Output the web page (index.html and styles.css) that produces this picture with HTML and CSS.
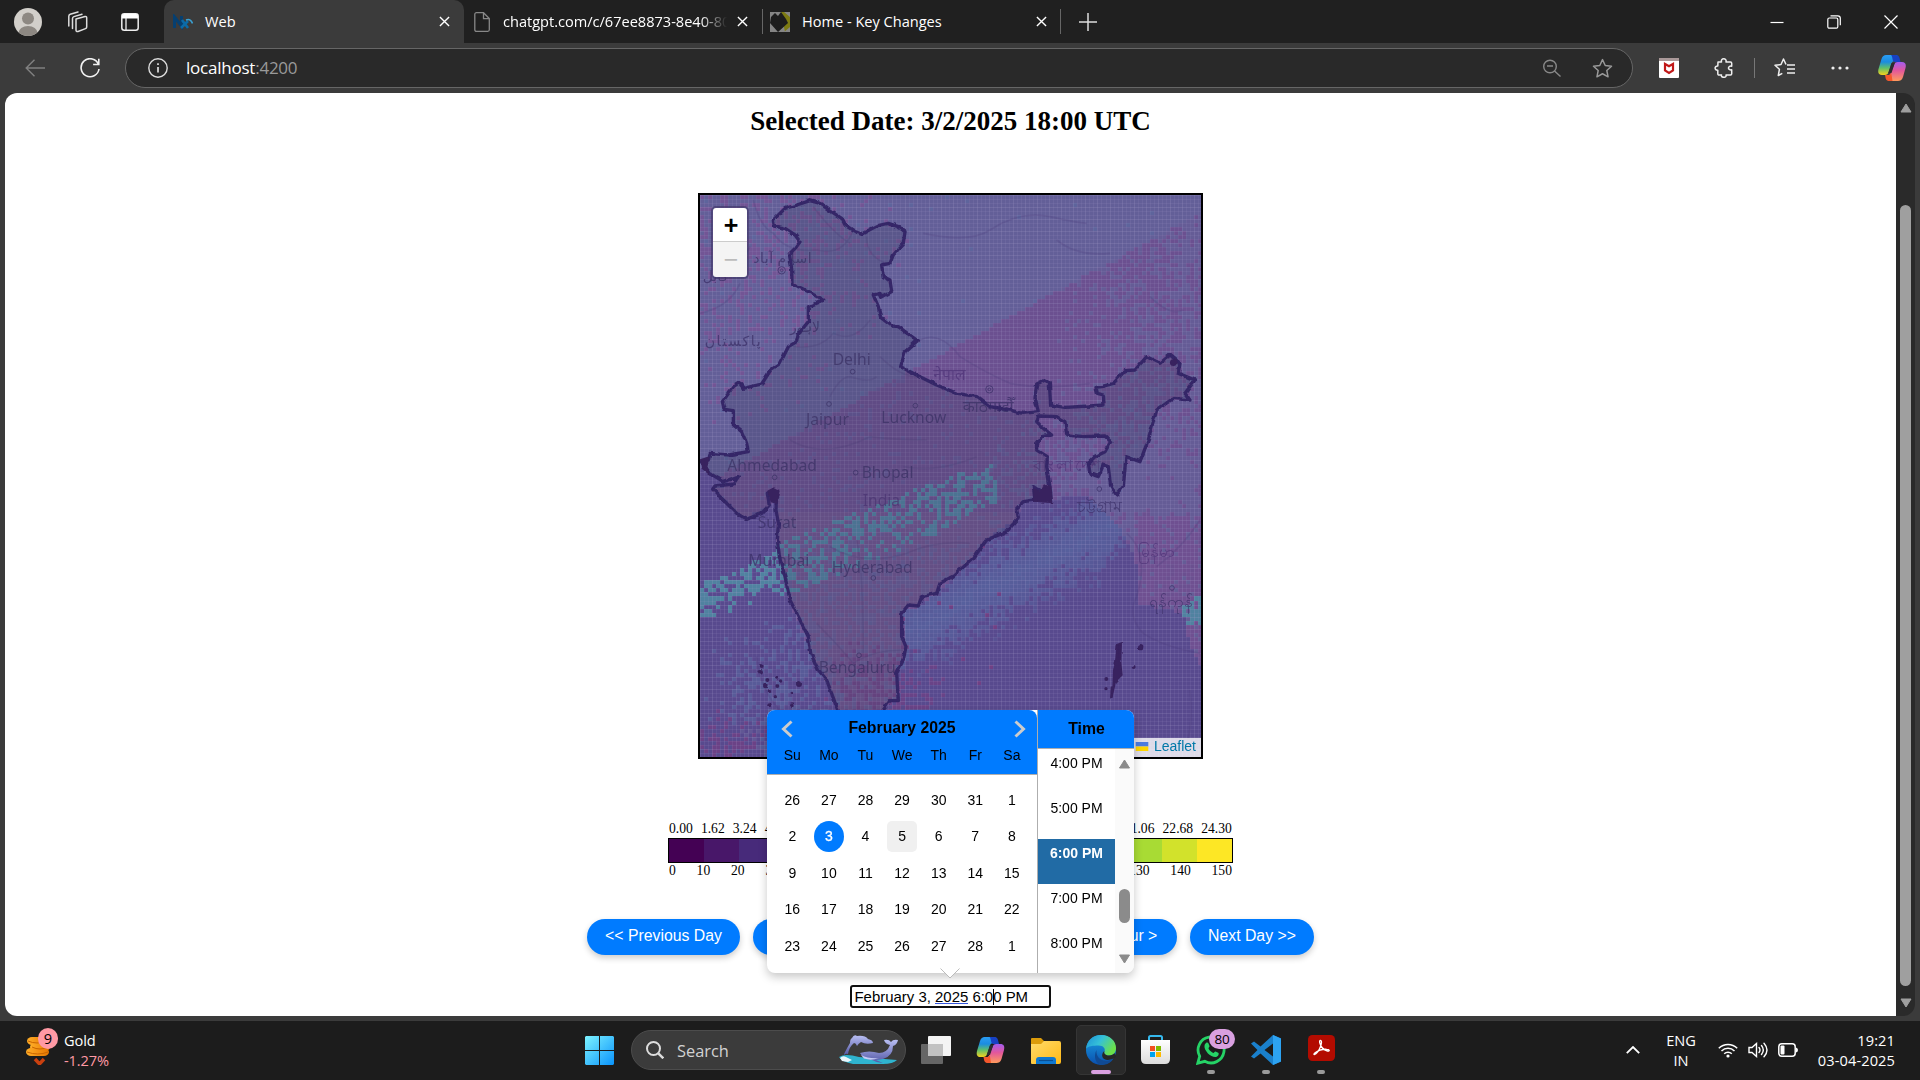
FILE: index.html
```html
<!DOCTYPE html>
<html lang="en">
<head>
<meta charset="utf-8">
<title>Web</title>
<link rel="stylesheet" href="styles.css">
</head>
<body>
<svg class="defs" width="0" height="0" aria-hidden="true">
  <defs>
    <linearGradient id="cpA" x1="0" y1="0" x2="0" y2="1"><stop offset="0" stop-color="#2a9df4"/><stop offset=".35" stop-color="#1b8ce0"/><stop offset=".65" stop-color="#5fbf6a"/><stop offset="1" stop-color="#f6d21c"/></linearGradient>
    <linearGradient id="cpB" x1="0" y1="0" x2="0" y2="1"><stop offset="0" stop-color="#a35cf0"/><stop offset=".45" stop-color="#e2579c"/><stop offset="1" stop-color="#ff9a5c"/></linearGradient>
    <linearGradient id="win" x1="0" y1="0" x2="1" y2="1"><stop offset="0" stop-color="#7df3ff"/><stop offset="1" stop-color="#0a93fb"/></linearGradient>
    <linearGradient id="fold" x1="0" y1="0" x2="1" y2="1"><stop offset="0" stop-color="#ffdb6b"/><stop offset="1" stop-color="#ffb916"/></linearGradient>
    <linearGradient id="edgeA" x1="0" y1="0" x2="1" y2=".5"><stop offset="0" stop-color="#1c8fd8"/><stop offset=".5" stop-color="#35c1d8"/><stop offset="1" stop-color="#6be04a"/></linearGradient>
    <linearGradient id="edgeB" x1="0" y1="0" x2="0" y2="1"><stop offset="0" stop-color="#1ba1e2"/><stop offset="1" stop-color="#0a4fae"/></linearGradient>
    <linearGradient id="store" x1="0" y1="0" x2="0" y2="1"><stop offset="0" stop-color="#ffffff"/><stop offset="1" stop-color="#dcdcdc"/></linearGradient>
    <linearGradient id="coin" x1="0" y1="0" x2="1" y2="0"><stop offset="0" stop-color="#ffae28"/><stop offset="1" stop-color="#e57600"/></linearGradient>
    <linearGradient id="whale" x1="0" y1="0" x2="0" y2="1"><stop offset="0" stop-color="#b9bff3"/><stop offset="1" stop-color="#5357a5"/></linearGradient>
    <symbol id="copilot" viewBox="0 0 28 28">
      <path d="M8 1h9c2 0 3 1 3.500 3l.8 3h-4c-2.500 0-3.500 1-4 3l-2.600 8c-.6 2-2 3-4 3H4c-3 0-4.500-2-3.500-6L3.500 5c1-3 2.500-4 4.500-4z" fill="url(#cpA)"/>
      <path d="M13 1h5c2 0 3 1 3.500 3l1 4h-4.500c-2 0-3-.5-3.500-3-.3-2-.5-3-1.500-4z" fill="#1741c4"/>
      <path d="M8 21h3c1-.2 1.500-1 2-2.500L16 11c.6-2 1.500-3 4-3h4c3 0 4.500 2 3.500 6L25 23c-1 3-3 4-5 4h-8c-2 0-2.500-1-3-2.500z" fill="url(#cpB)"/>
      <path d="M7 21h4c1-.2 1.700-1 2.200-2.500l1.300 8.500H11c-2 0-2.800-1-3.300-2.500z" fill="#f4572c"/>
      <path d="M13.500 9h3.300l-3.300 10h-3.300z" fill="#2c2c30"/>
    </symbol>
    <symbol id="x" viewBox="0 0 12 12"><path d="M1 1l10 10M11 1L1 11" stroke="currentColor" stroke-width="1.500" fill="none"/></symbol>
    <symbol id="star" viewBox="0 0 20 20"><path d="M10 1.500l2.600 5.600 6 .7-4.500 4.100 1.200 6L10 15l-5.300 2.900 1.200-6L1.400 7.800l6-.7z" stroke="currentColor" stroke-width="1.400" fill="none" stroke-linejoin="round"/></symbol>
  </defs>
</svg>

<header class="tabstrip">
  <div class="strip-tools">
    <svg class="avatar" viewBox="0 0 28 28" width="28" height="28"><clipPath id="av"><circle cx="14" cy="14" r="14"/></clipPath><g clip-path="url(#av)"><rect width="28" height="28" fill="#d2cfca"/><circle cx="14" cy="10.500" r="6" fill="#8d8882"/><ellipse cx="14" cy="25" rx="9.500" ry="7" fill="#8d8882"/></g></svg>
    <svg class="ic-spaces" viewBox="0 0 22 22" width="22" height="22" fill="none" stroke="#ddd" stroke-width="1.500" stroke-linejoin="round" stroke-linecap="round"><path d="M10 8l9-2.500c1-.2 1.700.3 1.700 1.200V16c0 .8-.4 1.300-1.200 1.600L12 20.500c-1.200.3-2-.2-2-1.200z"/><path d="M6.500 17.500V7.500c0-1 .4-1.600 1.400-1.900L16 3.200M2.800 15V5.200c0-1 .4-1.600 1.400-1.900L12 1"/></svg>
    <svg class="ic-vtabs" viewBox="0 0 18 18" width="18" height="18"><rect x=".8" y=".8" width="16.400" height="16.400" rx="2.500" fill="none" stroke="#eee" stroke-width="1.500"/><path d="M1 3a2 2 0 0 1 2-2h12a2 2 0 0 1 2 2v2.500H1z" fill="#fff"/><path d="M5 5v12" stroke="#eee" stroke-width="1.300"/></svg>
  </div>
  <div class="tab tab-active">
    <svg class="fav" viewBox="0 0 20 16" width="20" height="16"><path d="M1.500 14V3l7 9V2" fill="none" stroke="#063f70" stroke-width="3"/><path d="M8 14l7-7M9 6l6 8" stroke="#0b6ba8" stroke-width="2.600"/><path d="M13 6c3.500-1.500 5.500.5 6.500 3.500" stroke="#3b9fd0" stroke-width="1.600" fill="none"/></svg>
    <span class="tab-title">Web</span>
    <svg class="tab-x" width="11" height="11"><use href="#x"/></svg>
  </div>
  <div class="tab tab-chat">
    <svg class="fav-doc" viewBox="0 0 16 20" width="16" height="20" fill="none" stroke="#888" stroke-width="1.300"><path d="M2.500.7h7L15.300 6.500v11.300c0 .9-.6 1.500-1.500 1.500H2.500c-1 0-1.700-.6-1.700-1.500V2.300C.8 1.300 1.500.7 2.500.7zM9.500.7v6h6"/></svg>
    <span class="tab-title faded">chatgpt.com/c/67ee8873-8e40-80</span>
    <svg class="tab-x" width="11" height="11"><use href="#x"/></svg>
  </div>
  <i class="tab-sep"></i>
  <div class="tab tab-home">
    <svg class="fav" viewBox="0 0 20 20" width="20" height="20"><rect width="20" height="20" fill="#858585"/><path d="M11 0h9v20h-5z" fill="#7c7a12"/><path d="M1 5l4-4 3 3 3-4 5 7 2 4-10 9-8-9z" fill="#1c1c1c"/><path d="M14 0l6 5V0zM14 20l6-5v5z" fill="#858585"/></svg>
    <span class="tab-title">Home - Key Changes</span>
    <svg class="tab-x" width="11" height="11"><use href="#x"/></svg>
  </div>
  <i class="tab-sep"></i>
  <svg class="plus" viewBox="0 0 18 18" width="18" height="18"><path d="M9 0v18M0 9h18" stroke="#ddd" stroke-width="1.500"/></svg>
  <div class="win-ctl">
    <svg viewBox="0 0 14 14" width="14" height="14"><path d="M0.500 7.500h13" stroke="#fff" stroke-width="1.200"/></svg>
    <svg viewBox="0 0 14 14" width="14" height="14" fill="none" stroke="#fff" stroke-width="1.200"><rect x=".8" y="3" width="10" height="10.200" rx="1.500"/><path d="M3.500 .8h7.300a2.500 2.500 0 0 1 2.500 2.500v7"/></svg>
    <svg viewBox="0 0 14 14" width="14" height="14"><path d="M.5.5l13 13M13.500.5l-13 13" stroke="#fff" stroke-width="1.200"/></svg>
  </div>
</header>

<nav class="toolbar">
  <svg class="ic-back" viewBox="0 0 20 18" width="20" height="18" fill="none" stroke="#808080" stroke-width="1.400"><path d="M20 9H1.500M9.500 .8L1.200 9l8.300 8.200"/></svg>
  <svg class="ic-reload" viewBox="0 0 20 20" width="20" height="20" fill="none" stroke="#f2f2f2" stroke-width="1.600"><path d="M18.500 6.500A9 9 0 1 0 19 11M18.800 .8v5.700h-5.700"/></svg>
  <div class="address">
    <svg viewBox="0 0 20 20" width="20" height="20" fill="none" stroke="#ddd" stroke-width="1.400"><circle cx="10" cy="10" r="9.200"/><path d="M10 9v5.500M10 5.200v1.700" stroke-width="1.700"/></svg>
    <span class="url">localhost<span class="port">:4200</span></span>
    <svg class="ic-zoom" viewBox="0 0 18 18" width="18" height="18" fill="none" stroke="#888" stroke-width="1.400"><circle cx="7" cy="7.500" r="6.300"/><path d="M11.500 12l6 5.500M4 7h6"/></svg>
    <svg class="ic-star" width="21" height="21"><use href="#star"/></svg>
  </div>
  <svg class="ic-mc" viewBox="0 0 20 20" width="20" height="20"><rect width="20" height="20" rx="1" fill="#fff"/><rect width="20" height="3" fill="#a99"/><path d="M6 6v6.500l4 2.500 4-2.500V6l-4 2.300z" fill="none" stroke="#c01818" stroke-width="2.200"/></svg>
  <svg class="ic-puz" viewBox="0 0 20 20" width="20" height="20" fill="none" stroke="#eee" stroke-width="1.500" stroke-linejoin="round"><path d="M4 4h3.500C7 2 8 .8 9.700.8S12.500 2 12 4h4.500c.7 0 1.200.5 1.200 1.200v3c-4.300-.8-4.300 4.400 0 3.600v4c0 .7-.5 1.200-1.200 1.200H12c.5 1.500-.6 2.300-2.300 2.300S7 18.300 7.500 17H5c-.7 0-1.200-.5-1.200-1.200v-3.600C.2 12.500.2 7.700 3.800 8z"/></svg>
  <i class="bar-sep"></i>
  <svg class="ic-favs" viewBox="0 0 21 20" width="21" height="20" fill="none" stroke="#eee" stroke-width="1.500" stroke-linejoin="round"><path d="M12 6.500L9.500 1 7 6.500l-6 .8 4.400 4-1.100 6.200 4-2.200"/><path d="M13 7h8M13 11h8M13 15h8"/></svg>
  <svg class="ic-dots" viewBox="0 0 18 4" width="18" height="4" fill="#eee"><circle cx="2" cy="2" r="1.600"/><circle cx="9" cy="2" r="1.600"/><circle cx="16" cy="2" r="1.600"/></svg>
  <svg class="ic-cop" width="28" height="32"><use href="#copilot"/></svg>
</nav>

<div class="viewport">
  <main class="page">
    <h2 class="headline">Selected Date: 3/2/2025 18:00 UTC</h2>
    <div class="map">
      <canvas class="cells" id="cells" width="501" height="562"></canvas>
      <svg class="overlay" viewBox="0 0 501 562" width="501" height="562">
        <defs><filter id="rough" x="-5%" y="-5%" width="110%" height="110%"><feTurbulence type="fractalNoise" baseFrequency=".14" numOctaves="2" seed="4"/><feDisplacementMap in="SourceGraphic" scale="3.500" xChannelSelector="R" yChannelSelector="G"/></filter></defs>
        <g transform="translate(-10 -15) scale(.33333)">
          <g class="roads">
            <path d="M190 60q20 80 60 100q40 60 130 50q80 20 110-60M370 80q60 80 110 110M530 170q0 60 60 80M700 160q140 30 200-10q90-60 180-40t110 20M1100 180q60 50 160 40M690 480q60-30 120 50q80 50 150 80q100 20 240 0M310 500q80 10 120-40q60 30 110-40M420 650q30-60 60-60q60 20 80 0M570 530q60 60 110 60M300 780q100 60 240-10q80 10 170 10M60 300q80-20 120-100M30 400q90-20 120-90M640 860q100 20 220-30M420 1100q100 60 230 20q90-40 190-30M380 1330q60 60 110 120q60-40 150-40M500 1080q20 100 20 340M200 1430q10 120 110 200M1310 1060q70 60 30 190q-30 60 20 110q60 40 170 60M1400 1160q80-60 130-140M1380 350q60 60 100 40M1500 1530q10 100-10 160"/>
          </g>
          <g class="places">
            <text x="428" y="556">Delhi</text><text x="348" y="734">Jaipur</text><text x="574" y="728">Lucknow</text>
            <text x="112" y="872">Ahmedabad</text><text x="515" y="895">Bhopal</text><text x="518" y="978" class="country">India</text>
            <text x="203" y="1043">Surat</text><text x="175" y="1159">Mumbai</text><text x="425" y="1178">Hyderabad</text><text x="386" y="1480">Bengaluru</text>
            <text x="190" y="248" class="arab" textLength="175">اسلام آباد</text><text x="300" y="456" class="arab">لاہور</text><text x="44" y="497" class="arab" textLength="168">پاکستان</text><text x="38" y="302" class="arab">کابل</text>
            <text x="730" y="600" class="country">नेपाल</text><text x="818" y="695">काठमाडौँ</text>
            <text x="1030" y="874" class="country" textLength="200">বাংলাদেশ</text><text x="1160" y="995">চট্টগ্রাম</text>
            <text x="1345" y="1130" class="country">မြန်မာ</text><text x="1376" y="1280">ရန်ကုန်</text>
            <g class="dots"><circle cx="488" cy="575" r="7"/><circle cx="417" cy="672" r="7"/><circle cx="676" cy="677" r="7"/><circle cx="254" cy="892" r="7"/><circle cx="497" cy="878" r="7"/><circle cx="550" cy="1194" r="7"/><circle cx="507" cy="1426" r="7"/><circle cx="1228" cy="927" r="7"/><circle cx="1446" cy="1224" r="7"/><circle cx="275" cy="271" r="11"/><circle cx="275" cy="271" r="4"/><circle cx="898" cy="628" r="11"/><circle cx="898" cy="628" r="4"/></g>
          </g>
        </g>
        <g filter="url(#rough)"><g transform="translate(-10 -15) scale(.33333)">
          <path id="india" class="india" d="M360 62L320 75 285 85 250 120 252 138 285 145 315 165 330 185 318 202 298 222 305 265 306 310 355 335 398 360 355 380 355 425 325 462 320 485 295 500 270 550 242 570 215 612 160 625 148 608 130 620 97 665 103 688 130 692 130 735 155 755 170 790 175 815 115 825 60 820 55 840 34 845 45 860 60 880 100 905 145 890 130 912 75 918 68 928 100 960 140 1000 170 1018 215 1000 238 975 232 940 250 930 260 940 258 990 265 1030 262 1080 268 1130 285 1190 300 1260 330 1320 355 1370 362 1420 385 1470 410 1500 445 1595 480 1690 540 1690 580 1590 600 1562 625 1562 620 1480 640 1440 648 1400 635 1370 635 1300 655 1275 685 1278 695 1250 740 1240 750 1210 790 1188 850 1135 890 1080 950 1055 985 1015 980 985 1000 965 1035 960 1030 920 1060 940 1080 920 1070 860 1072 830 1040 810 1040 790 1055 770 1085 765 1060 745 1040 725 1045 708 1100 710 1125 725 1130 765 1180 770 1245 768 1262 785 1245 815 1215 830 1195 850 1200 880 1225 890 1240 855 1255 860 1262 920 1280 945 1300 920 1308 830 1350 845 1375 780 1400 690 1450 655 1500 660 1485 640 1515 600 1465 580 1470 550 1440 525 1410 550 1370 530 1335 570 1305 572 1270 610 1235 620 1218 622 1222 640 1240 645 1242 675 1200 678 1125 682 1082 675 1078 610 1065 600 1040 612 1035 655 1045 695 1000 700 960 690 900 680 860 650 800 640 740 615 690 590 632 560 645 515 682 482 625 440 605 438 572 412 565 380 550 345 570 340 575 352 605 335 600 300 580 290 575 255 600 250 610 225 640 190 645 155 625 140 595 130 560 138 515 162 495 155 465 135 455 115 420 92 390 70z"/>
          <g class="isles">
            <path d="M1030 925l20 10 15-25 20 10 5 50-60-5zM232 932l20-10 20 10-10 40-20-5zM30 838l30-10-8 30 10 30-25-20zM1280 1392l16-6-2 60 4 40-20 20-5 20-6-2 2-50 6-30zM1262 1520l14-4-8 34-8 6z"/>
            <circle cx="1352" cy="1400" r="8"/><circle cx="1331" cy="1461" r="6"/><circle cx="1249" cy="1497" r="6"/><circle cx="1248" cy="1526" r="5"/>
            <circle cx="215" cy="1458" r="6"/><circle cx="212" cy="1477" r="7"/><circle cx="232" cy="1500" r="6"/><circle cx="260" cy="1494" r="5"/><circle cx="272" cy="1503" r="5"/><circle cx="226" cy="1518" r="7"/><circle cx="236" cy="1533" r="6"/><circle cx="262" cy="1518" r="6"/><circle cx="256" cy="1550" r="5"/><circle cx="327" cy="1512" r="9"/><circle cx="306" cy="1537" r="5"/><circle cx="238" cy="1576" r="6"/><circle cx="307" cy="1574" r="7"/><circle cx="1450" cy="548" r="10"/>
          </g>
        </g></g>
      </svg>
      <div class="zoomctl"><span>+</span><span class="off">−</span></div>
      <div class="credit"><svg viewBox="0 0 14 10" width="14" height="9"><path d="M0 0h14v5H0z" fill="#4c7be1"/><path d="M0 5h14v5H0z" fill="#ffd500"/></svg>Leaflet</div>
    </div>

    <section class="legend">
      <div class="scale"><span>0.00</span><span>1.62</span><span>3.24</span><span>4.86</span><span>6.48</span><span>8.10</span><span>9.72</span><span>11.34</span><span>12.96</span><span>14.58</span><span>16.20</span><span>17.82</span><span>19.44</span><span>21.06</span><span>22.68</span><span>24.30</span></div>
      <div class="ramp"><i class="c0"></i><i class="c1"></i><i class="c2"></i><i class="c3"></i><i class="c4"></i><i class="c5"></i><i class="c6"></i><i class="c7"></i><i class="c8"></i><i class="c9"></i><i class="c10"></i><i class="c11"></i><i class="c12"></i><i class="c13"></i><i class="c14"></i><i class="c15"></i></div>
      <div class="scale"><span>0</span><span>10</span><span>20</span><span>30</span><span>40</span><span>50</span><span>60</span><span>70</span><span>80</span><span>90</span><span>100</span><span>110</span><span>120</span><span>130</span><span>140</span><span>150</span></div>
    </section>

    <div class="steps">
      <button class="step s-prevday">&lt;&lt; Previous Day</button>
      <button class="step">&lt; Previous Hour</button>
      <button class="step s-nexthour">Next Hour &gt;</button>
      <button class="step s-nextday">Next Day &gt;&gt;</button>
    </div>

    <div class="picker-wrap">
      <div class="field">February 3, <span class="spell">2025</span> 6:0<i class="caret"></i>0 PM</div>
      <div class="picker">
        <div class="cal">
          <div class="cal-head">
            <div class="cal-title">
              <svg viewBox="0 0 12 18" width="12" height="18"><path d="M10.500 1.500L2.500 9l8 7.500" fill="none" stroke="#ccc" stroke-width="3"/></svg>
              <b>February 2025</b>
              <svg viewBox="0 0 12 18" width="12" height="18"><path d="M1.500 1.500l8 7.500-8 7.500" fill="none" stroke="#ccc" stroke-width="3"/></svg>
            </div>
            <div class="week"><span>Su</span><span>Mo</span><span>Tu</span><span>We</span><span>Th</span><span>Fr</span><span>Sa</span></div>
          </div>
          <div class="month">
            <div class="week"><span>26</span><span>27</span><span>28</span><span>29</span><span>30</span><span>31</span><span>1</span></div>
            <div class="week"><span>2</span><span class="sel">3</span><span>4</span><span class="hov">5</span><span>6</span><span>7</span><span>8</span></div>
            <div class="week"><span>9</span><span>10</span><span>11</span><span>12</span><span>13</span><span>14</span><span>15</span></div>
            <div class="week"><span>16</span><span>17</span><span>18</span><span>19</span><span>20</span><span>21</span><span>22</span></div>
            <div class="week"><span>23</span><span>24</span><span>25</span><span>26</span><span>27</span><span>28</span><span>1</span></div>
          </div>
        </div>
        <div class="times">
          <div class="times-head">Time</div>
          <div class="times-body">
            <div class="times-list"><span>4:00 PM</span><span>5:00 PM</span><span class="on">6:00 PM</span><span>7:00 PM</span><span>8:00 PM</span></div>
            <div class="tbar">
              <svg viewBox="0 0 12 10" width="13" height="10"><path d="M6 1l5 8H1z" fill="#8b8b8b" stroke="#8b8b8b" stroke-linejoin="round"/></svg>
              <i></i>
              <svg viewBox="0 0 12 10" width="13" height="10"><path d="M6 9l5-8H1z" fill="#8b8b8b" stroke="#8b8b8b" stroke-linejoin="round"/></svg>
            </div>
          </div>
        </div>
        <svg class="tip" viewBox="0 0 20 11" width="20" height="11"><path d="M.5 .5L10 10 19.500 .5z" fill="#fff"/><path d="M.5 .5L10 10 19.500 .5" fill="none" stroke="#bbb"/></svg>
      </div>
    </div>
  </main>
  <div class="scroll">
    <svg viewBox="0 0 12 10" width="12" height="10"><path d="M6 1l5 8H1z" fill="#9f9f9f" stroke="#9f9f9f" stroke-linejoin="round"/></svg>
    <i></i>
    <svg viewBox="0 0 12 10" width="12" height="10"><path d="M6 9l5-8H1z" fill="#9f9f9f" stroke="#9f9f9f" stroke-linejoin="round"/></svg>
  </div>
</div>

<footer class="taskbar">
  <div class="widget">
    <div class="coins">
      <svg viewBox="0 0 24 30" width="24" height="30"><g fill="url(#coin)"><rect x="1" y="2" width="20" height="8" rx="5"/><rect x="4" y="8" width="20" height="8" rx="5"/><rect x="0" y="13" width="23" height="8" rx="5"/></g><g fill="none" stroke="#c96500"><path d="M2 6q9 4 18 0M1 17q11 4 21 0M6 12q8 4 16 0"/></g><path d="M9 24l4.500 5 4.500-5" fill="none" stroke="#c9400f" stroke-width="3.400"/></svg>
      <span class="badge nine">9</span>
    </div>
    <div class="wtext"><span>Gold</span><span class="down">-1.27%</span></div>
  </div>
  <div class="apps">
    <svg class="a-win" viewBox="0 0 29 29" width="29" height="29"><path d="M1 0h13v14H0V1zM15 0h13l1 1v13H15zM0 15h14v14H1l-1-1zM15 15h14v13l-1 1H15z" fill="url(#win)"/></svg>
    <div class="search">
      <svg viewBox="0 0 18 18" width="18" height="18" fill="none" stroke="#ddd"><circle cx="7.500" cy="7.500" r="6.500" stroke-width="2"/><path d="M12.300 12.300l5 5" stroke-width="2.400"/></svg>
      <span>Search</span>
      <svg class="sea" viewBox="0 0 60 30" width="60" height="30"><path d="M0 22q6-4 20 0l38 3q-4 4-14 4H14Q3 27 0 22z" fill="#2fb4cf"/><path d="M1 23q3-3 6-1l6 3-4 2-6-1z" fill="#e8f6fb"/><path d="M5 19Q8 13 11 8q0-4 2-5 2-4 5-2 8-1 11 3 5 1 5 4-7 2-12-1-3 2-4 4-1-3-3-3-5 4-6 11-2-1-4 1z" fill="url(#whale)"/><path d="M21 18q9-3 19 0 8 0 11-8-5-1-6-5 5-1 7 2 2-3 7-2-1 5-5 6 0 10-10 13-4 1-7 1l7 3q-6 0-11-3-9-1-12-7z" fill="url(#whale)"/><path d="M22 20q8 4 18 3-8 3-15 .5z" fill="#c5cbf5"/></svg>
    </div>
    <svg class="a-task" viewBox="0 0 30 28" width="30" height="28"><rect y="8" width="22" height="20" rx="1" fill="#666"/><rect x="7" y="0" width="23" height="20" rx="1" fill="#f4f4f4"/><rect x="7" y="8" width="15" height="12" fill="#c2c2c2"/></svg>
    <svg class="a-cop" width="29" height="28"><use href="#copilot"/></svg>
    <svg class="a-fold" viewBox="0 0 30 27" width="30" height="27"><path d="M0 2q0-1 1-1h9l3 3h15v6H0z" fill="#dc9c0b"/><path d="M0 7h10l3-3h15q2 0 2 2v19q0 2-2 2H1q-1 0-1-1z" fill="url(#fold)"/><path d="M5 27v-4q0-3 3-3h14q3 0 3 3v4z" fill="#0f78d0"/><path d="M8 23.500h14" stroke="#0a4f94" stroke-width="1.200"/></svg>
    <div class="app live"><svg viewBox="0 0 30 30" width="30" height="30"><circle cx="15" cy="15" r="15" fill="url(#edgeB)"/><path d="M0 14C1 5 7 0 15 0c9 0 15 6 15 13 0 5-3 7.500-7 7.500-4 0-5.500-2-4.500-4 1-3-1-6-6-6S1.500 11 0 14z" fill="url(#edgeA)"/><path d="M10.500 15c-1 7 5 12 12 10.500 2-.5 4-1.500 5-2C25 28 20 30 15 30c-5-1-8-8-4.500-15z" fill="#104a93"/><path d="M18.500 16c-1 2 .5 4.500 4.500 4.500 2.500 0 4.500-1 5.500-2.500l1.500 4-2.300 1.500q-6 2.500-9.500.5c-3-2-2.500-6 .3-8z" fill="#262626"/></svg><i></i></div>
    <svg class="a-store" viewBox="0 0 29 30" width="29" height="30"><path d="M8 6V2.500Q8 1 9.500 1h10Q21 1 21 2.500V6" fill="none" stroke="#35b8ec" stroke-width="2"/><path d="M0 5h29v19q0 5-5 5H5q-5 0-5-5z" fill="url(#store)"/><path d="M9 11h5v5H9z" fill="#f25022"/><path d="M15 11h5v5h-5z" fill="#7fba00"/><path d="M9 17h5v5H9z" fill="#00a4ef"/><path d="M15 17h5v5h-5z" fill="#ffb900"/></svg>
    <div class="app"><svg viewBox="0 0 30 30" width="30" height="30"><path d="M1.800 28.200l1.900-7A13 13 0 1 1 8.800 26.300z" fill="none" stroke="#25d366" stroke-width="2.800"/><path d="M10 8c1-.8 2-.5 2.500.5l1 2.500c.2.800-1.200 1.800-1 2.500 1 2 2.500 3.500 4.700 4.400.8.200 1.500-1.600 2.300-1.400l2.700 1.300c.8.400.6 2-.2 3-1.500 1.800-4 1.500-6.500.2-3-1.500-5-4-6.300-6.500C8.200 12 8 9.500 10 8z" fill="#25d366"/></svg><span class="badge eighty">80</span><i></i></div>
    <div class="app"><svg viewBox="0 0 30 30" width="30" height="30"><path d="M22 0l8 3.500v23L22 30 9.500 18.500 3 23.500 0 21.500 6.500 15 0 8.500l3-2 6.500 5zM22 8.500L13.500 15l8.500 6.500z" fill="#1a80cc" fill-rule="evenodd"/><path d="M22 0l8 3.500v23L22 30z" fill="#2da3f2"/></svg><i></i></div>
    <div class="app"><svg viewBox="0 0 27 26" width="27" height="26"><rect width="27" height="26" rx="4.500" fill="#b30b00"/><path d="M6.500 19.500c3.500-1 7-9 7-12 0-3-2.400-2.500-1.800 0 .9 4 4 7.500 7.800 8.500 2.800.4 2-1.700-.8-1.700-4-.2-8.500 1.200-11.200 3.200-1.200 1-2.200 2.200-1 2z" fill="none" stroke="#fff" stroke-width="1.300"/></svg><i></i></div>
  </div>
  <div class="tray">
    <svg class="t-up" viewBox="0 0 14 8" width="14" height="8"><path d="M.8 7.200L7 1l6.200 6.200" fill="none" stroke="#fff" stroke-width="1.800"/></svg>
    <div class="lang"><span>ENG</span><span>IN</span></div>
    <svg class="t-wifi" viewBox="0 0 20 16" width="20" height="16" fill="none" stroke="#fff" stroke-width="1.500"><path d="M.8 6.200a13 13 0 0 1 18.400 0M3.500 9a9.300 9.300 0 0 1 13 0M6.200 11.700a5.500 5.500 0 0 1 7.600 0"/><circle cx="10" cy="14" r="1.600" fill="#fff" stroke="none"/></svg>
    <svg class="t-vol" viewBox="0 0 20 16" width="20" height="16" fill="none" stroke="#fff" stroke-width="1.400"><path d="M1 5.500h3L8.500 1.500v13L4 10.500H1z"/><path d="M11 5.500q2 2.500 0 5M13.500 3.500q3.600 4.500 0 9M16 1.200q6 6.800 0 13.600" stroke-linecap="round"/></svg>
    <svg class="t-bat" viewBox="0 0 20 14" width="20" height="14"><rect x=".8" y=".8" width="16.400" height="12.400" rx="3" fill="none" stroke="#fff" stroke-width="1.500"/><rect x="2.500" y="2.500" width="4" height="9" rx="1" fill="#fff"/><path d="M18 4.500q2 .5 2 2.500t-2 2.500z" fill="#fff"/></svg>
    <div class="clock"><span>19:21</span><span>03-04-2025</span></div>
  </div>
</footer>
<script src="map.js"></script>
</body>
</html>
```
FILE: styles.css
```css
* { box-sizing: border-box; }
body { margin: 0; width: 1920px; height: 1080px; overflow: hidden; display: flex; flex-direction: column; background: #3b3b3b; font-family: "Open Sans", "Noto Sans", sans-serif; color: #fff; }
svg { display: block; flex: none; }
.defs { position: absolute; }

.tabstrip { height: 43px; flex: none; display: flex; align-items: center; background: #202020; }
.strip-tools { width: 164px; display: flex; align-items: center; padding-left: 14px; }
.ic-spaces { margin-left: 24px; }
.ic-vtabs { margin-left: 33px; }
.tab { height: 43px; display: flex; align-items: center; font-size: 14.6px; }
.tab-active { width: 300px; background: #3b3b3b; border-radius: 10px 10px 0 0; padding-left: 9px; }
.tab-active .tab-title { margin-left: 12px; }
.tab-title { white-space: nowrap; line-height: 20px; letter-spacing: -.02px; margin-top: -2px; }
.tab-x { margin-left: auto; margin-right: 14px; }
.tab-chat { width: 298px; padding-left: 10px; }
.tab-chat .tab-title { margin-left: 13px; width: 224px; overflow: hidden; }
.tab-chat .tab-x { margin-right: 14px; }
.faded { -webkit-mask-image: linear-gradient(90deg, #000 88%, transparent); mask-image: linear-gradient(90deg, #000 88%, transparent); }
.tab-sep { width: 1px; height: 25px; background: #666; }
.tab-home { width: 297px; padding-left: 7px; }
.tab-home .tab-title { margin-left: 12px; }
.tab-home .tab-x { margin-right: 13px; }
.plus { margin-left: 18px; }
.win-ctl { margin-left: auto; display: flex; gap: 43px; padding-right: 22px; }

.toolbar { height: 50px; flex: none; display: flex; align-items: center; }
.ic-back { margin-left: 25px; }
.ic-reload { margin-left: 35px; }
.address { margin-left: 25px; width: 1508px; height: 40px; border: 1px solid #666; border-radius: 20px; background: #292929; display: flex; align-items: center; padding: 0 19px 0 22px; }
.url { font-size: 17px; letter-spacing: -.23px; margin-left: 18px; flex: 1; line-height: 24px; }
.port { color: #999; }
.ic-zoom { margin-right: 31px; }
.ic-star { color: #999; }
.ic-mc { margin-left: 26px; }
.ic-puz { margin-left: 35px; }
.bar-sep { width: 1px; height: 20px; background: #777; margin-left: 20px; }
.ic-favs { margin-left: 19px; }
.ic-dots { margin-left: 36px; }
.ic-cop { margin-left: 29px; }

.viewport { height: 923px; flex: none; margin: 0 5px; display: flex; border-radius: 12px; overflow: hidden; background: #2a2a2a; }
.page { width: 1891px; background: #fff; color: #000; display: flex; flex-direction: column; align-items: center; font-family: "Liberation Serif", serif; }
.headline { margin: 13px 0 56px; font-size: 27px; line-height: 31px; font-weight: bold; }
.scroll { width: 19px; display: flex; flex-direction: column; align-items: center; padding: 10px 0 8px; }
.scroll i { width: 11px; height: 781px; border-radius: 6px; background: #9f9f9f; margin: 92px 0 12px; }

.map { position: relative; flex: none; width: 505px; height: 566px; border: 2px solid #000; background: #5d5091; }
.cells, .overlay { position: absolute; left: 0; top: 0; }
.india { fill: rgba(48, 48, 85, .2); stroke: #342867; stroke-width: 10; stroke-linejoin: round; }
.isles { fill: #38225f; }
.roads path { fill: none; stroke: #4a3c7c; stroke-width: 5; opacity: .25; }
.places { font: 47px "Noto Sans", "DejaVu Sans", sans-serif; fill: #3c3169; opacity: .75; }
.places .country { fill: #4f3579; }
.places .arab { font-size: 42px; }
.dots circle { fill: none; stroke: #3c3169; stroke-width: 3; }
.zoomctl { position: absolute; left: 11px; top: 11px; width: 38px; height: 73px; padding: 2px; border-radius: 5px; background: rgba(60, 50, 100, .6); display: flex; flex-direction: column; font: bold 25px/34px "Liberation Sans", sans-serif; text-align: center; }
.zoomctl span { height: 34px; padding-left: 2px; background: #fff; border-bottom: 1px solid #ccc; border-radius: 3px 3px 0 0; }
.zoomctl .off { height: 35px; background: #f4f4f4; color: #bbb; border: 0; border-radius: 0 0 3px 3px; font-weight: normal; line-height: 35px; }
.credit { position: absolute; right: 0; bottom: 0; height: 19px; padding: 0 5px 3px 5px; display: flex; align-items: center; gap: 5px; background: rgba(255, 255, 255, .8); color: #0078a8; font: 14px/16px "Liberation Sans", sans-serif; }

.legend { width: 565px; margin-top: 62px; font-size: 13.6px; line-height: 16px; }
.scale { display: flex; justify-content: space-between; padding: 0 1px 0 1px; }
.ramp { height: 25px; margin-top: 1px; border: 1px solid #000; display: flex; }
.ramp i { flex: 1; }
.c0 { background: #440154; } .c1 { background: #481769; } .c2 { background: #472a7a; } .c3 { background: #433d84; }
.c4 { background: #3d4e8a; } .c5 { background: #355e8d; } .c6 { background: #2e6d8e; } .c7 { background: #297b8e; }
.c8 { background: #238a8d; } .c9 { background: #1f988b; } .c10 { background: #23a884; } .c11 { background: #3ab876; }
.c12 { background: #67cc5c; } .c13 { background: #a8db34; } .c14 { background: #d2e22b; } .c15 { background: #fde725; }

.steps { width: 727px; display: flex; gap: 13px; margin-top: 40px; }
.step { height: 36px; padding: 0 0 2px; width: 150px; border: 0; border-radius: 18px; background: #007bff; color: #fff; font: 15.8px "Liberation Sans", sans-serif; box-shadow: 0 3px 6px rgba(0, 0, 0, .2); white-space: nowrap; }
.s-prevday { width: 153px; }
.s-nexthour { margin-left: auto; width: 124px; }
.s-nextday { width: 124px; }

.picker-wrap { position: relative; margin-top: 30px; font-family: "Liberation Sans", sans-serif; }
.field { width: 201px; height: 23px; border: 2px solid #101010; border-radius: 3px; padding-left: 2.5px; font-size: 14.95px; line-height: 20px; white-space: pre; }
.spell { border-bottom: 1px solid #3355dd; display: inline-block; height: 17px; line-height: 20px; vertical-align: top; }
.caret { display: inline-block; width: 1px; height: 16px; margin-right: -1px; background: #000; vertical-align: -3px; }
.picker { position: absolute; left: -83px; top: -275px; width: 367px; height: 263px; display: flex; border-radius: 8px; background: #fff; box-shadow: 0 4px 10px rgba(0, 0, 0, .22); font-size: 14px; }
.cal { width: 271px; border-right: 1px solid #aeaeae; }
.cal-head { height: 65px; background: #007bff; border-bottom: 1px solid #aeaeae; border-radius: 8px 8px 0 0; }
.cal-title { display: flex; justify-content: space-between; align-items: center; height: 36px; padding: 2px 11px 0 14px; }
.cal-title b { font-size: 15.8px; margin: -3px 3px 0 0; }
.week { display: flex; padding-left: 7px; }
.week span { width: 36.6px; height: 36.5px; display: flex; align-items: center; justify-content: center; }
.cal-head .week span { height: 18px; }
.month { padding-top: 6.5px; }
.month .sel, .month .hov { width: 30px; height: 31px; margin: 2.75px 3.3px; border-radius: 50%; background: #007bff; color: #fff; -webkit-text-stroke: .3px #fff; }
.month .hov { border-radius: 5px; background: #f0f0f0; color: #000; -webkit-text-stroke: 0; }
.times { flex: 1; display: flex; flex-direction: column; }
.times-head { height: 39px; background: #007bff; border-bottom: 1px solid #aeaeae; border-radius: 0 8px 0 0; text-align: center; font: bold 15.8px/37px "Liberation Sans", sans-serif; padding-left: 1px; }
.times-body { flex: 1; display: flex; }
.times-list { width: 77px; height: 224px; overflow: hidden; }
.times-list span { display: block; height: 45px; padding-top: 6px; line-height: 16px; text-align: center; }
.times-list .on { background: #216ba5; color: #fff; font-weight: bold; }
.tbar { width: 19px; background: #fafafa; border-radius: 0 0 8px 0; display: flex; flex-direction: column; align-items: center; padding: 10px 0 9px; }
.tbar i { width: 11px; height: 34px; margin: 120px 0 31px; border-radius: 6px; background: #8b8b8b; }
.tip { position: absolute; left: 173px; top: 258px; }

.taskbar { height: 59px; margin-top: 5px; flex: none; background: #1c1c1c; display: flex; font-size: 14.6px; line-height: 20px; }
.widget { display: flex; padding: 9px 0 0 26px; width: 585px; }
.coins { position: relative; width: 38px; padding-top: 5px; }
.badge { position: absolute; border-radius: 10px; height: 20px; line-height: 20px; text-align: center; color: #000; }
.nine { left: 12px; top: -2px; width: 20px; height: 21px; background: #ff99a4; }
.wtext, .lang, .clock { display: flex; flex-direction: column; letter-spacing: -.1px; }
.down { color: #ff99a4; }
.apps { display: flex; align-items: center; padding-bottom: 1px; }
.search { margin: 0 15px 0 17px; width: 275px; height: 40px; border: 1px solid #4c4c4c; border-radius: 20px; background: #3b3b3b; display: flex; align-items: center; padding: 0 6px 0 14px; color: #d2d2d2; font-size: 16.4px; }
.search span { margin-left: 13px; flex: 1; margin-top: 1px; }
.a-cop { margin-left: 25px; }
.a-fold { margin: 0 15px 0 26px; }
.a-store { margin: 0 16px 0 15px; }
.app { position: relative; width: 50px; height: 50px; margin-right: 5px; border-radius: 5px; display: flex; flex-direction: column; align-items: center; padding-top: 10px; }
.app i { position: absolute; left: 21px; bottom: 1px; width: 8px; height: 4px; border-radius: 2px; background: #9a9a9a; }
.live { background: #2a2a2a; border: 1px solid #353535; padding-top: 9px; margin-right: 0; }
.live i { left: 14px; bottom: 0; width: 20px; background: #d9a0e0; }
.eighty { left: 23px; top: 4px; width: 26px; background: #d9a0e0; font-size: 13.5px; letter-spacing: -.3px; }
.tray { margin-left: auto; display: flex; align-items: center; padding: 0 25px 2px 0; }
.lang { width: 40px; text-align: center; margin-left: 21px; }
.t-wifi { margin-left: 17px; }
.t-vol { margin-left: 10px; }
.t-bat { margin-left: 10px; }
.clock { width: 97px; text-align: right; letter-spacing: .1px; }
```
FILE: map.js
```javascript
// Paints the gridded rainfall field beneath the boundary overlay.
// Field coordinates are three units per pixel, offset by (30, 45).
const ctx = document.getElementById("cells").getContext("2d");
let seed = 20250302;
const rnd = () => ((seed = (seed * 1664525 + 1013904223) >>> 0) / 4294967296);

const sea = new Path2D("M0 850L60 880 100 905 130 912 68 928 170 1018 238 975 260 940 262 1080 300 1260 362 1420 410 1500 480 1690 540 1690 600 1562 625 1562 620 1480 648 1400 635 1300 685 1278 740 1240 850 1135 890 1080 985 1015 1000 965 1190 950 1300 1060 1350 1180 1350 1270 1480 1300 1500 1400 1560 1500 1560 1760 0 1760z");
const india = new Path2D(document.getElementById("india").getAttribute("d"));

const mix = (a, b, t) => a.map((v, i) => v + (b[i] - v) * t);
const BLUE = [99, 95, 152], PURPLE = [107, 80, 144], OCEAN = [88, 74, 142];
const PINK = [120, 80, 148], CYAN = [80, 130, 160], TEAL = [88, 104, 160], RED = [112, 64, 132];
const inBlob = (x, y, cx, cy, rx, ry) => Math.max(0, 1 - Math.hypot((x - cx) / rx, (y - cy) / ry));

function shade(x, y) {
  const wet = ctx.isPointInPath(sea, x, y);
  const inland = ctx.isPointInPath(india, x, y);
  const edge = 936 - 0.545 * x;
  let c = y < edge ? BLUE : PURPLE;
  if (wet) c = OCEAN;
  else if (y > 1000 && inland) c = mix(PURPLE, [116, 88, 144], .6);
  if (y < edge) {
    if (rnd() < .5 * inBlob(x, y, 60, 200, 640, 560)) c = mix(c, PINK, .7);
    if (rnd() < .012) c = mix(c, TEAL, .5);
  } else if (!wet) {
    const p = Math.max(0, (x - 1080) / 700) + inBlob(x, y, 1250, 930, 420, 260) * .8;
    if (rnd() < p) c = mix(c, BLUE, .8);
    if (x > 1330 && y > 1010 && rnd() < .75) c = mix(PURPLE, PINK, .3);
    if (inland && rnd() < .12) c = mix(c, TEAL, .3);
  }
  // light rain over the Bay of Bengal and along the east coast
  const bay = 1385 - 0.52 * (x - 600);
  const reach = 165 * Math.min(1, Math.max(0, (1380 - x) / 120));
  if (wet && x > 620 && Math.abs(y - bay) < reach) {
    const t = 1 - Math.abs(y - bay) / reach;
    if (rnd() < t * 1.3) c = mix(c, [86, 104, 162], .2 + t * .4 + rnd() * .15);
  }
  if (inland && y > 1100 && rnd() < .3) c = mix(c, TEAL, .35);
  if (rnd() < inBlob(x, y, 570, 1530, 210, 170) * .7) c = mix(c, RED, .7);
  if (rnd() < inBlob(x, y, 130, 1690, 260, 110) * .6) c = mix(c, RED, .8);
  if (rnd() < inBlob(x, y, 270, 1530, 230, 260) * .55) c = mix(c, TEAL, .55);
  if (wet && rnd() < .008 && x > 600 && x < 960 && y < 1560) c = RED;
  // convective band crossing the peninsula
  const mid = 1270 - 0.4 * (x - 30);
  const half = x < 260 ? 60 : x > 820 ? 62 : 82;
  if (x < 925 && Math.abs(y - mid) < half && rnd() < .56 - .2 * Math.abs(y - mid) / half) c = CYAN;
  if (inBlob(x, y, 1525, 1295, 45, 50) > 0 && rnd() < .75) c = CYAN;
  return c;
}

const step = 4.02;
for (let py = 0; py < 562; py += step) {
  for (let px = 0; px < 501; px += step) {
    const c = shade((px + 12) * 3, (py + 17) * 3).map(Math.round);
    ctx.fillStyle = `rgb(${c})`;
    ctx.fillRect(Math.floor(px), Math.floor(py), 5, 5);
  }
}
for (let k = 0; k * step < 562; k++) {
  const p = Math.floor(k * step);
  ctx.fillStyle = k % 3 ? "rgba(170,160,205,.11)" : "rgba(170,160,205,.2)";
  ctx.fillRect(p, 0, 1, 562);
  ctx.fillRect(0, p, 501, 1);
}
```
